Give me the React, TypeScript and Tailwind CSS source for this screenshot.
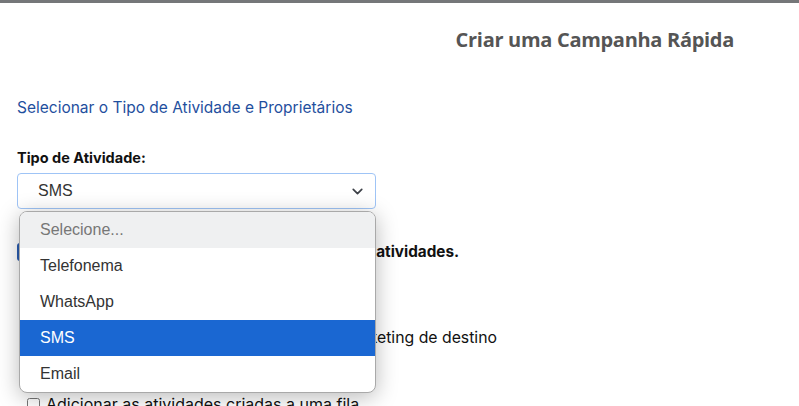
import { ChevronDown } from "lucide-react";

const options = ["Selecione...", "Telefonema", "WhatsApp", "SMS", "Email"];

function ActivitySelect() {
  return (
    <div className="relative w-[359px]">
      <div className="flex h-[36px] items-center justify-between rounded-[4px] border border-[#9fc4f6] bg-white pl-[20px] pr-[9px] font-['Liberation_Sans',Arial,sans-serif] text-[16px] text-[#333]">
        <span>SMS</span>
        <ChevronDown size={17} strokeWidth={2.4} className="text-[#3d4148]" />
      </div>
      <ul className="absolute left-[2px] top-[38px] z-10 w-[357px] overflow-hidden rounded-[8px] border border-[#a9a9a9] bg-white font-['Liberation_Sans',Arial,sans-serif] text-[16px] shadow-[0_4px_22px_rgba(0,0,0,0.28)]">
        {options.map((opt, i) => (
          <li
            key={opt}
            className={
              i === 0
                ? "flex h-[36px] items-center bg-[#eff0f1] pl-[20px] text-[#777]"
                : opt === "SMS"
                  ? "flex h-[36px] items-center bg-[#1a67d2] pl-[20px] text-white"
                  : "flex h-[36px] items-center pl-[20px] text-[#333]"
            }
          >
            {opt}
          </li>
        ))}
      </ul>
    </div>
  );
}

export default function App() {
  return (
    <div className="h-[406px] w-[799px] overflow-hidden bg-white font-['Inter',sans-serif] text-[#111]">
      <div className="h-[3px] bg-[#757779]" />
      <div className="flex justify-end pr-[65px] pt-[23px]">
        <h1 className="font-['Open_Sans',sans-serif] text-[20px] font-bold leading-[28px] tracking-[-0.3px] text-[#555]">
          Criar uma Campanha Rápida
        </h1>
      </div>

      <div className="px-[17px]">
        <p className="mt-[43px] text-[15.5px] leading-[22px] text-[#1f4f9e]">
          Selecionar o Tipo de Atividade e Proprietários
        </p>

        <label className="mt-[29px] block text-[14.5px] font-bold leading-[20px]">Tipo de Atividade:</label>
        <div className="mt-[5px]">
          <ActivitySelect />
        </div>

        <div className="mt-[33px] flex items-center gap-[6px]">
          <span className="flex h-[18px] w-[18px] items-center justify-center rounded-[3px] bg-[#2a5db0] text-[12px] text-white">✓</span>
          <span className="text-[15.3px] font-bold leading-[20px]">
            Atribuir um proprietário automaticamente às atividades.
          </span>
        </div>

        <p className="mt-[65px] pl-[24px] text-[15.8px] leading-[22px]">
          Selecionar a lista ou o segmento para o marketing de destino
        </p>

        <label className="mt-[44px] flex items-center gap-[6px] pl-[10px] text-[16px] leading-[22px]">
          <input type="checkbox" className="h-[13px] w-[13px]" />
          Adicionar as atividades criadas a uma fila
        </label>
      </div>
    </div>
  );
}
